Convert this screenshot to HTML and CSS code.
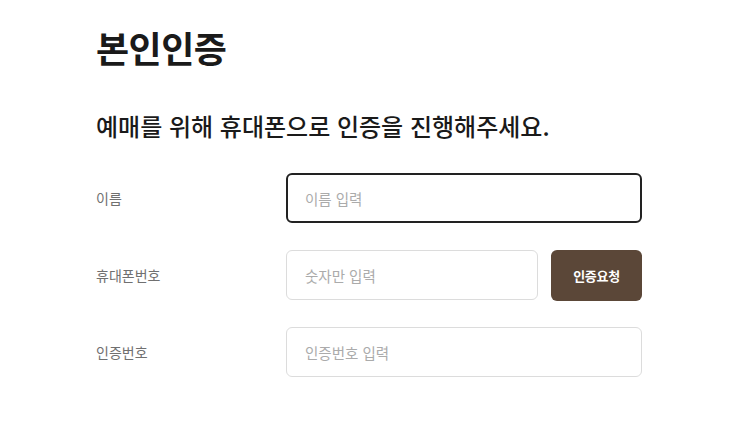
FILE: index.html
```html
<!DOCTYPE html>
<html lang="ko">
<head>
<meta charset="utf-8">
<title>본인인증</title>
<link rel="stylesheet" href="styles.css">
</head>
<body>
<main class="page">
  <h1 class="title">본인인증</h1>
  <p class="subtitle">예매를 위해 휴대폰으로 인증을 진행해주세요.</p>
  <form class="form">
    <div class="row">
      <label class="label" for="name">이름</label>
      <div class="field">
        <input class="input focused" id="name" type="text" placeholder="이름 입력">
      </div>
    </div>
    <div class="row">
      <label class="label" for="phone">휴대폰번호</label>
      <div class="field">
        <input class="input" id="phone" type="text" placeholder="숫자만 입력">
        <button class="btn" type="button">인증요청</button>
      </div>
    </div>
    <div class="row">
      <label class="label" for="code">인증번호</label>
      <div class="field">
        <input class="input" id="code" type="text" placeholder="인증번호 입력">
      </div>
    </div>
  </form>
</main>
</body>
</html>
```
FILE: styles.css
```css
* { box-sizing: border-box; }
html, body { margin: 0; padding: 0; background: #fff; }
body {
  font-family: "Noto Sans CJK KR", "Noto Sans", sans-serif;
  color: #1a1a1a;
}
.page {
  width: 546px;
  margin-left: 96px;
  padding-top: 21px;
}
.title {
  margin: 0;
  font-size: 36px;
  font-weight: 700;
  line-height: 52px;
  letter-spacing: -0.5px;
  color: #1a1a1a;
}
.subtitle {
  margin: 36px 0 0;
  font-size: 24px;
  font-weight: 500;
  line-height: 34px;
  letter-spacing: 0;
  color: #1a1a1a;
}
.form {
  margin-top: 30px;
  display: flex;
  flex-direction: column;
  gap: 27px;
}
.row {
  display: flex;
  align-items: center;
  height: 50px;
}
.label {
  width: 190px;
  flex: none;
  font-size: 14px;
  color: #707070;
}
.field {
  flex: 1;
  display: flex;
  gap: 13px;
  height: 50px;
}
.input {
  flex: 1;
  min-width: 0;
  height: 50px;
  border: 1px solid #dcdcdc;
  border-radius: 6px;
  padding: 0 18px;
  font-family: inherit;
  font-size: 14.5px;
  color: #333;
  outline: none;
  background: #fff;
}
.input::placeholder { color: #ababab; }
.input.focused { border: 2px solid #222; padding-left: 17px; }
.btn {
  flex: none;
  width: 91px;
  height: 51px;
  border: none;
  border-radius: 6px;
  background: #5b4738;
  color: #fff;
  font-family: inherit;
  font-size: 13px;
  font-weight: 700;
  letter-spacing: -0.3px;
}
```
